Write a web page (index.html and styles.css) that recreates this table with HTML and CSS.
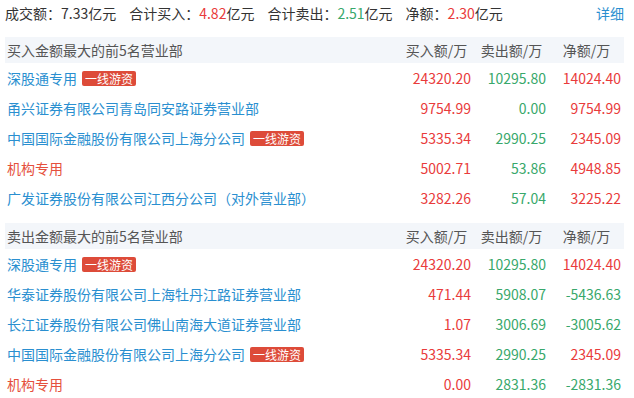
FILE: index.html
```html
<!DOCTYPE html>
<html lang="zh">
<head>
<meta charset="utf-8">
<link rel="stylesheet" href="styles.css">
</head>
<body>
<div class="page">
  <div class="summary">
    <span class="item">成交额：7.33亿元</span>
    <span class="item">合计买入：<span class="red">4.82</span>亿元</span>
    <span class="item">合计卖出：<span class="green">2.51</span>亿元</span>
    <span class="item">净额：<span class="red">2.30</span>亿元</span>
    <a class="detail">详细</a>
  </div>

  <div class="section">
    <div class="row head">
      <div class="name">买入金额最大的前5名营业部</div>
      <div class="hc">买入额/万</div>
      <div class="hc">卖出额/万</div>
      <div class="hc">净额/万</div>
    </div>
    <div class="row">
      <div class="name"><span class="link">深股通专用</span><span class="badge">一线游资</span></div>
      <div class="num red">24320.20</div>
      <div class="num green">10295.80</div>
      <div class="num red">14024.40</div>
    </div>
    <div class="row">
      <div class="name"><span class="link">甬兴证券有限公司青岛同安路证券营业部</span></div>
      <div class="num red">9754.99</div>
      <div class="num green">0.00</div>
      <div class="num red">9754.99</div>
    </div>
    <div class="row">
      <div class="name"><span class="link">中国国际金融股份有限公司上海分公司</span><span class="badge">一线游资</span></div>
      <div class="num red">5335.34</div>
      <div class="num green">2990.25</div>
      <div class="num red">2345.09</div>
    </div>
    <div class="row">
      <div class="name"><span class="inst">机构专用</span></div>
      <div class="num red">5002.71</div>
      <div class="num green">53.86</div>
      <div class="num red">4948.85</div>
    </div>
    <div class="row">
      <div class="name"><span class="link">广发证券股份有限公司江西分公司（对外营业部）</span></div>
      <div class="num red">3282.26</div>
      <div class="num green">57.04</div>
      <div class="num red">3225.22</div>
    </div>
  </div>

  <div class="section">
    <div class="row head">
      <div class="name">卖出金额最大的前5名营业部</div>
      <div class="hc">买入额/万</div>
      <div class="hc">卖出额/万</div>
      <div class="hc">净额/万</div>
    </div>
    <div class="row">
      <div class="name"><span class="link">深股通专用</span><span class="badge">一线游资</span></div>
      <div class="num red">24320.20</div>
      <div class="num green">10295.80</div>
      <div class="num red">14024.40</div>
    </div>
    <div class="row">
      <div class="name"><span class="link">华泰证券股份有限公司上海牡丹江路证券营业部</span></div>
      <div class="num red">471.44</div>
      <div class="num green">5908.07</div>
      <div class="num green">-5436.63</div>
    </div>
    <div class="row">
      <div class="name"><span class="link">长江证券股份有限公司佛山南海大道证券营业部</span></div>
      <div class="num red">1.07</div>
      <div class="num green">3006.69</div>
      <div class="num green">-3005.62</div>
    </div>
    <div class="row">
      <div class="name"><span class="link">中国国际金融股份有限公司上海分公司</span><span class="badge">一线游资</span></div>
      <div class="num red">5335.34</div>
      <div class="num green">2990.25</div>
      <div class="num red">2345.09</div>
    </div>
    <div class="row">
      <div class="name"><span class="inst">机构专用</span></div>
      <div class="num red">0.00</div>
      <div class="num green">2831.36</div>
      <div class="num green">-2831.36</div>
    </div>
  </div>
</div>
</body>
</html>
```
FILE: styles.css
```css
html, body {
  margin: 0;
  padding: 0;
  background: #fff;
}
body {
  font-family: "Noto Sans CJK SC", "Microsoft YaHei", sans-serif;
  font-size: 14px;
  color: #333;
}
.page {
  padding: 0 10px 0 5px;
}
.summary {
  display: flex;
  align-items: center;
  height: 25px;
  margin-bottom: 12px;
  padding-left: 0;
}
.summary .item {
  margin-right: 13px;
}
.detail {
  margin-left: auto;
  color: #2a8fd0;
  cursor: pointer;
}
.red { color: #e93b3b; }
.green { color: #38a86b; }
.section {
  margin-bottom: 10px;
}
.row {
  display: grid;
  grid-template-columns: 1fr 75px 75px 75px;
  align-items: center;
  height: 30px;
  padding-right: 3px;
}
.row.head {
  height: 26px;
  background: #f3f6fa;
  color: #555;
}
.name {
  padding-left: 2px;
  display: flex;
  align-items: center;
  white-space: nowrap;
}
.hc {
  text-align: center;
  padding-left: 6px;
  white-space: nowrap;
}
.num {
  text-align: right;
  white-space: nowrap;
}
.link {
  color: #2a8fd0;
}
.inst {
  color: #e5503d;
}
.badge {
  margin-left: 5px;
  background: #dd4b39;
  color: #fff;
  font-size: 12px;
  line-height: 15px;
  height: 15px;
  padding: 0 3px;
  border-radius: 2px;
}
```
